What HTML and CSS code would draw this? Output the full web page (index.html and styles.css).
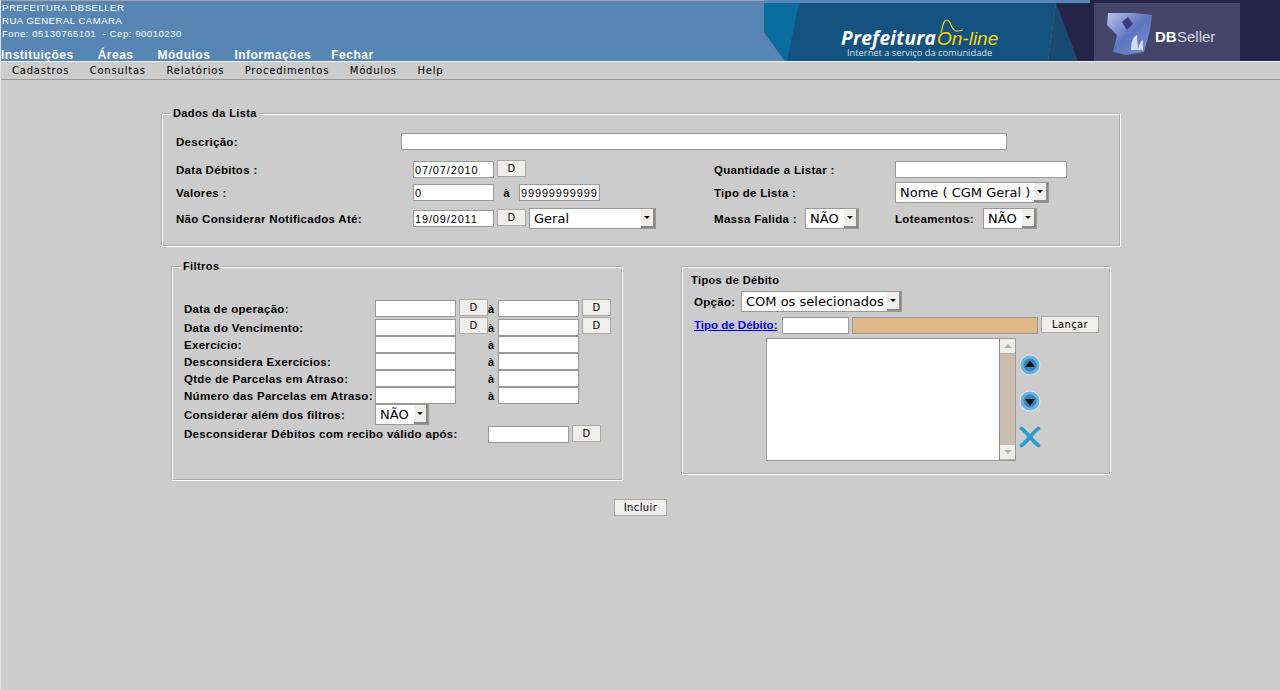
FILE: index.html
```html
<!DOCTYPE html>
<html lang="pt-BR">
<head>
    <meta charset="UTF-8">
    <title>Prefeitura On-line</title>
    <link rel="stylesheet" href="styles.css">
</head>
<body>
    <div class="topo">
        <div class="topo-info">
            <div class="endereco">
                <div>PREFEITURA DBSELLER</div>
                <div>RUA GENERAL CAMARA</div>
                <div>Fone: 05130765101 &nbsp;- Cep: 90010230</div>
            </div>
            <div class="menu-topo">
                <a>Instituições</a>
                <a>Áreas</a>
                <a>Módulos</a>
                <a>Informações</a>
                <a class="menu-fechar">Fechar</a>
            </div>
        </div>
        <svg class="banner" width="516" height="61" viewBox="0 0 516 61">
            <defs>
                <linearGradient id="logo7" x1="0" y1="0" x2="1" y2="1">
                    <stop offset="0" stop-color="#b9c3ee"/>
                    <stop offset="0.5" stop-color="#5d74c0"/>
                    <stop offset="1" stop-color="#7f90d6"/>
                </linearGradient>
            </defs>
            <rect x="292" width="224" height="61" fill="#25254a"/>
            <rect width="326" height="3" fill="#5786b5"/>
            <polygon points="0,3 292,3 284,61 21,61 0,32" fill="#14527f"/>
            <polygon points="0,3 35,3 23,61 21,61 0,32" fill="#0a6da0"/>
            <polygon points="292,3 284,61 314,61" fill="#1b4a70"/>
            <rect x="330" y="3" width="146" height="58" fill="#45456a"/>
            <text class="bn-prefeitura" x="77" y="45">Prefeitura</text>
            <text class="bn-online" x="173" y="45">On-line</text>
            <path d="M177 33C179 26 179 20 183 20C187 20 187 30 192 31C195 31.5 197 30 199 30" fill="none" stroke="#f2d60a" stroke-width="1.2"/>
            <text class="bn-slogan" x="83" y="56">Internet a serviço da comunidade</text>
            <path d="M344 13L370 13L388 15L386 30L380 52L362 55L349 52L353 35L343 25z" fill="url(#logo7)"/>
            <path d="M358 22L364 17L369 24L363 30z" fill="#3a3a80"/>
            <path d="M367 50C367 42 369 37 373 35L374 50zM374 50C375 44 377 41 379 40L379 50z" fill="#d4dbf4"/>
            <text class="bn-db" x="391" y="42">DB</text>
            <text class="bn-seller" x="413" y="42">Seller</text>
        </svg>
    </div>

    <div class="menu-sistema">
        <a>Cadastros</a>
        <a>Consultas</a>
        <a>Relatórios</a>
        <a>Procedimentos</a>
        <a>Módulos</a>
        <a>Help</a>
    </div>

    <form class="conteudo">
        <fieldset class="grupo dados">
            <legend>Dados da Lista</legend>
            <div class="linha linha-descricao">
                <label class="col-rotulo">Descrição:</label>
                <input class="campo campo-descricao" type="text">
            </div>
            <div class="linha linha-data">
                <label class="col-rotulo">Data Débitos :</label>
                <div class="col-valores">
                    <input class="campo campo-data" type="text" value="07/07/2010">
                    <button class="botao botao-d" type="button">D</button>
                </div>
                <label class="col-rotulo-dir">Quantidade a Listar :</label>
                <input class="campo campo-qtde" type="text">
            </div>
            <div class="linha linha-valores">
                <label class="col-rotulo">Valores :</label>
                <div class="col-valores">
                    <input class="campo campo-data" type="text" value="0">
                    <b class="ate">à</b>
                    <input class="campo campo-data" type="text" value="99999999999">
                </div>
                <label class="col-rotulo-dir">Tipo de Lista :</label>
                <div class="combo combo-lista">Nome ( CGM Geral )<i class="seta"></i></div>
            </div>
            <div class="linha linha-notificados">
                <label class="col-rotulo">Não Considerar Notificados Até:</label>
                <div class="col-valores">
                    <input class="campo campo-data" type="text" value="19/09/2011">
                    <button class="botao botao-d" type="button">D</button>
                    <div class="combo combo-geral">Geral<i class="seta"></i></div>
                </div>
                <label class="rotulo-massa">Massa Falida :</label>
                <div class="combo combo-nao combo-massa">NÃO<i class="seta"></i></div>
                <label class="rotulo-lote">Loteamentos:</label>
                <div class="combo combo-nao">NÃO<i class="seta"></i></div>
            </div>
        </fieldset>

        <div class="blocos">
            <fieldset class="grupo filtros">
                <legend>Filtros</legend>
                <div class="filtro filtro-d">
                    <label>Data de operação:</label>
                    <input class="campo campo-data" type="text">
                    <button class="botao botao-d" type="button">D</button>
                    <b class="ate-filtro">à</b>
                    <input class="campo campo-data" type="text">
                    <button class="botao botao-d" type="button">D</button>
                </div>
                <div class="filtro filtro-venc">
                    <label>Data do Vencimento:</label>
                    <input class="campo campo-data" type="text">
                    <button class="botao botao-d" type="button">D</button>
                    <b class="ate-filtro">à</b>
                    <input class="campo campo-data" type="text">
                    <button class="botao botao-d" type="button">D</button>
                </div>
                <div class="filtro">
                    <label>Exercício:</label>
                    <input class="campo campo-data" type="text">
                    <b class="ate-filtro ate-solto">à</b>
                    <input class="campo campo-data" type="text">
                </div>
                <div class="filtro">
                    <label>Desconsidera Exercícios:</label>
                    <input class="campo campo-data" type="text">
                    <b class="ate-filtro ate-solto">à</b>
                    <input class="campo campo-data" type="text">
                </div>
                <div class="filtro">
                    <label>Qtde de Parcelas em Atraso:</label>
                    <input class="campo campo-data" type="text">
                    <b class="ate-filtro ate-solto">à</b>
                    <input class="campo campo-data" type="text">
                </div>
                <div class="filtro">
                    <label>Número das Parcelas em Atraso:</label>
                    <input class="campo campo-data" type="text">
                    <b class="ate-filtro ate-solto">à</b>
                    <input class="campo campo-data" type="text">
                </div>
                <div class="filtro filtro-combo">
                    <label>Considerar além dos filtros:</label>
                    <div class="combo combo-nao">NÃO<i class="seta"></i></div>
                </div>
                <div class="filtro filtro-recibo">
                    <label>Desconsiderar Débitos com recibo válido após:</label>
                    <input class="campo campo-data" type="text">
                    <button class="botao botao-d" type="button">D</button>
                </div>
            </fieldset>

            <fieldset class="grupo tipos">
                <div class="tipos-titulo">Tipos de Débito</div>
                <div class="tipos-opcao">
                    <label>Opção:</label>
                    <div class="combo combo-opcao">COM os selecionados<i class="seta"></i></div>
                </div>
                <div class="tipos-lancar">
                    <a class="link-tipo" href="#">Tipo de Débito:</a>
                    <input class="campo campo-cod" type="text">
                    <input class="campo campo-nome" type="text">
                    <button class="botao botao-lancar" type="button">Lançar</button>
                </div>
                <div class="tipos-lista">
                    <div class="lista">
                        <div class="lista-area"></div>
                        <div class="rolagem">
                            <span class="rol-botao"><i class="rol-cima"></i></span>
                            <span class="rol-trilho"></span>
                            <span class="rol-botao"><i class="rol-baixo"></i></span>
                        </div>
                    </div>
                    <div class="acoes">
                        <svg width="22" height="22" viewBox="0 0 22 22">
                            <circle cx="11" cy="11" r="10" fill="#6ab2e0" stroke="#e8f2f8" stroke-width="0.8"/>
                            <circle cx="11" cy="11" r="6.5" fill="#3a86bb"/>
                            <polygon points="11,6.5 16,13 6,13" fill="#071018"/>
                        </svg>
                        <svg width="22" height="22" viewBox="0 0 22 22">
                            <circle cx="11" cy="11" r="10" fill="#6ab2e0" stroke="#e8f2f8" stroke-width="0.8"/>
                            <circle cx="11" cy="11" r="6.5" fill="#3a86bb"/>
                            <polygon points="11,16 16,9 6,9" fill="#071018"/>
                        </svg>
                        <svg width="22" height="22" viewBox="0 0 22 22">
                            <path d="M2.5 2.5C8 6 14 16 19.5 19.5M19.5 2.5C14 6 8 16 2.5 19.5" fill="none" stroke="#2a9ccf" stroke-width="3.8" stroke-linecap="round"/>
                        </svg>
                    </div>
                </div>
            </fieldset>
        </div>

        <div class="rodape">
            <button class="botao botao-incluir" type="button">Incluir</button>
        </div>
    </form>
</body>
</html>
```

FILE: styles.css
```css
html, body {
    height: 100%;
}
body {
    margin: 0;
    background-color: #cccccc;
    border-left: 1px solid #e2e2e2;
    overflow: hidden;
    font-family: "Liberation Sans", Arial, sans-serif;
    font-size: 11px;
    color: #000;
}

/* topo */
.topo {
    display: flex;
    justify-content: space-between;
    height: 61px;
    background-color: #5786b5;
    box-shadow: inset 0 1px 0 #a9a49c;
}
.topo-info {
    display: flex;
    flex-direction: column;
    justify-content: space-between;
    color: #fff;
}
.endereco {
    padding: 1px 0 0 1px;
    font-size: 9.5px;
    line-height: 13px;
    letter-spacing: 0.55px;
}
.menu-topo {
    display: flex;
    gap: 24px;
    font-size: 12px;
    font-weight: bold;
    letter-spacing: 0.5px;
    line-height: 14px;
    margin-bottom: -1px;
}
.menu-fechar {
    margin-left: -4px;
}
.banner {
    display: block;
    flex: none;
}
.banner text {
    font-family: "Open Sans", sans-serif;
}
.banner .bn-prefeitura {
    font-size: 19px;
    font-weight: bold;
    font-style: italic;
    letter-spacing: 0.3px;
    fill: #fff;
}
.banner .bn-online {
    font-family: "Liberation Sans", sans-serif;
    font-size: 19px;
    font-style: italic;
    fill: #f2d60a;
}
.banner .bn-slogan {
    font-size: 9.3px;
    fill: #d5e0ea;
}
.banner .bn-db {
    font-family: "Liberation Sans", sans-serif;
    font-size: 15px;
    font-weight: bold;
    fill: #fff;
}
.banner .bn-seller {
    font-family: "Liberation Sans", sans-serif;
    font-size: 15px;
    fill: #d7d7e4;
}

.menu-sistema {
    display: flex;
    gap: 20.5px;
    height: 17px;
    padding-left: 11px;
    background-color: #cccccc;
    border-top: 1px solid #f2f2f2;
    border-bottom: 1px solid #999;
    font-family: "DejaVu Sans", sans-serif;
    font-size: 10px;
    letter-spacing: 0.8px;
    line-height: 17px;
}

/* conteudo */
.conteudo {
    width: 960px;
    margin: 0 0 0 160px;
}
.grupo {
    margin: 0;
    padding: 0;
    border: 2px groove #fff;
    box-sizing: border-box;
    min-width: 0;
}
.grupo legend {
    padding: 0 2px;
    font-weight: bold;
    letter-spacing: 0.4px;
    line-height: 13px;
}
.dados {
    height: 140px;
    margin-top: 27px;
    padding-left: 13px;
}
.dados legend {
    margin-left: -5px;
}
.linha {
    display: flex;
    align-items: center;
}
.linha label, .filtro label, .tipos-opcao label {
    font-size: 11.5px;
    font-weight: bold;
    letter-spacing: 0.3px;
}
.col-rotulo {
    width: 237px;
    flex: none;
}
.linha-descricao {
    height: 17px;
    margin-top: 13px;
}
.linha-descricao .col-rotulo {
    width: 225px;
}
.linha-data {
    height: 19px;
    margin-top: 10px;
}
.linha-valores {
    height: 21px;
    margin-top: 3px;
}
.linha-notificados {
    height: 21px;
    margin-top: 5px;
}
.col-valores {
    display: flex;
    align-items: center;
    width: 301px;
    flex: none;
}
.col-rotulo-dir {
    width: 181px;
    flex: none;
}
.campo {
    box-sizing: border-box;
    height: 17px;
    margin: 0;
    padding: 0 1px;
    background-color: #fff;
    border: 1px solid #999;
    font-family: "Liberation Sans", sans-serif;
    font-size: 11px;
    letter-spacing: 0.85px;
    color: #000;
    border-radius: 0;
    outline: none;
}
.campo-descricao {
    width: 606px;
}
.campo-data {
    width: 81px;
    flex: none;
}
.campo-qtde {
    width: 172px;
}
.ate {
    width: 25px;
    text-align: center;
}
.botao {
    box-sizing: border-box;
    height: 17px;
    margin: 0;
    padding: 0;
    background-color: #f0eeea;
    border: 1px solid #a8a8a8;
    border-radius: 0;
    font-family: "DejaVu Sans", sans-serif;
    font-size: 10px;
    letter-spacing: 0.4px;
    color: #000;
}
.botao-d {
    width: 29px;
    flex: none;
    margin-left: 3px;
    position: relative;
    top: -1px;
}
.combo {
    position: relative;
    box-sizing: border-box;
    height: 21px;
    flex: none;
    background-color: #fff;
    border: 1px solid #999;
    padding-left: 4px;
    font-family: "DejaVu Sans", sans-serif;
    font-size: 13px;
    line-height: 19px;
    white-space: nowrap;
}
.seta {
    position: absolute;
    top: 0;
    right: 0;
    width: 14px;
    height: 19px;
    background-color: #f0eeea;
    box-shadow: inset -2px -2px 0 #8a8a8a;
}
.seta::after {
    content: "";
    position: absolute;
    left: 3px;
    top: 7px;
    border-left: 3px solid transparent;
    border-right: 3px solid transparent;
    border-top: 3px solid #000;
}
.combo-lista {
    width: 154px;
}
.combo-geral {
    width: 127px;
    margin-left: 3px;
}
.combo-nao {
    width: 54px;
}
.combo-opcao {
    width: 161px;
}
.linha .rotulo-massa {
    width: 91px;
    flex: none;
}
.combo-massa {
    margin-right: 36px;
}
.linha .rotulo-lote {
    width: 88px;
    flex: none;
}

/* blocos de baixo */
.blocos {
    display: flex;
    align-items: flex-start;
    padding-left: 10px;
}
.filtros {
    width: 452px;
    height: 221px;
    margin-top: 13px;
    padding-left: 11px;
}
.filtros legend {
    margin-left: -3px;
}
.filtro {
    display: flex;
    align-items: center;
    height: 17px;
}
.filtro label {
    width: 191px;
    flex: none;
    white-space: nowrap;
}
.filtro-d {
    height: 19px;
    margin: 26px 0 1px;
}
.filtro-venc .botao-d {
    top: -2px;
}
.ate-filtro {
    width: 10px;
    flex: none;
}
.ate-solto {
    margin-left: 32px;
}
.filtro-combo {
    height: 21px;
}
.filtro-recibo {
    height: 18px;
}
.filtro-recibo label {
    width: 304px;
}
.tipos {
    width: 430px;
    height: 209px;
    margin: 19px 0 0 58px;
}
.tipos-titulo {
    margin: 6px 0 0 8px;
    font-weight: bold;
    letter-spacing: 0.4px;
    line-height: 13px;
}
.tipos-opcao {
    display: flex;
    align-items: center;
    margin: 4px 0 0 11px;
}
.tipos-opcao label {
    width: 47px;
    flex: none;
}
.tipos-lancar {
    display: flex;
    align-items: center;
    margin: 4px 0 0 11px;
    height: 18px;
}
.link-tipo {
    width: 88px;
    flex: none;
    color: #0000ee;
    font-size: 11.5px;
    font-weight: bold;
}
.campo-cod {
    width: 67px;
    flex: none;
}
.campo-nome {
    width: 186px;
    flex: none;
    margin-left: 3px;
    background-color: #deb887;
}
.botao-lancar {
    width: 58px;
    flex: none;
    margin-left: 3px;
    position: relative;
    top: -1px;
}
.tipos-lista {
    display: flex;
    margin: 4px 0 0 83px;
}
.lista {
    display: flex;
    box-sizing: border-box;
    width: 250px;
    height: 123px;
    background-color: #fff;
    border: 1px solid #999;
}
.lista-area {
    flex: 1;
}
.rolagem {
    display: flex;
    flex-direction: column;
    width: 15px;
    background-color: #c9bdb0;
    border-left: 1px solid #8f8a84;
}
.rol-botao {
    display: flex;
    align-items: center;
    justify-content: center;
    height: 14px;
    background-color: #f0eeea;
    border-bottom: 1px solid #b5b0a8;
}
.rol-trilho {
    flex: 1;
}
.rol-cima {
    border-left: 4px solid transparent;
    border-right: 4px solid transparent;
    border-bottom: 4px solid #b9b5ad;
}
.rol-baixo {
    border-left: 4px solid transparent;
    border-right: 4px solid transparent;
    border-top: 4px solid #b9b5ad;
}
.acoes {
    display: flex;
    flex-direction: column;
    gap: 14px;
    margin: 16px 0 0 3px;
}
.rodape {
    display: flex;
    justify-content: center;
    margin-top: 18px;
    padding-right: 1px;
}
.botao-incluir {
    width: 53px;
}
```
